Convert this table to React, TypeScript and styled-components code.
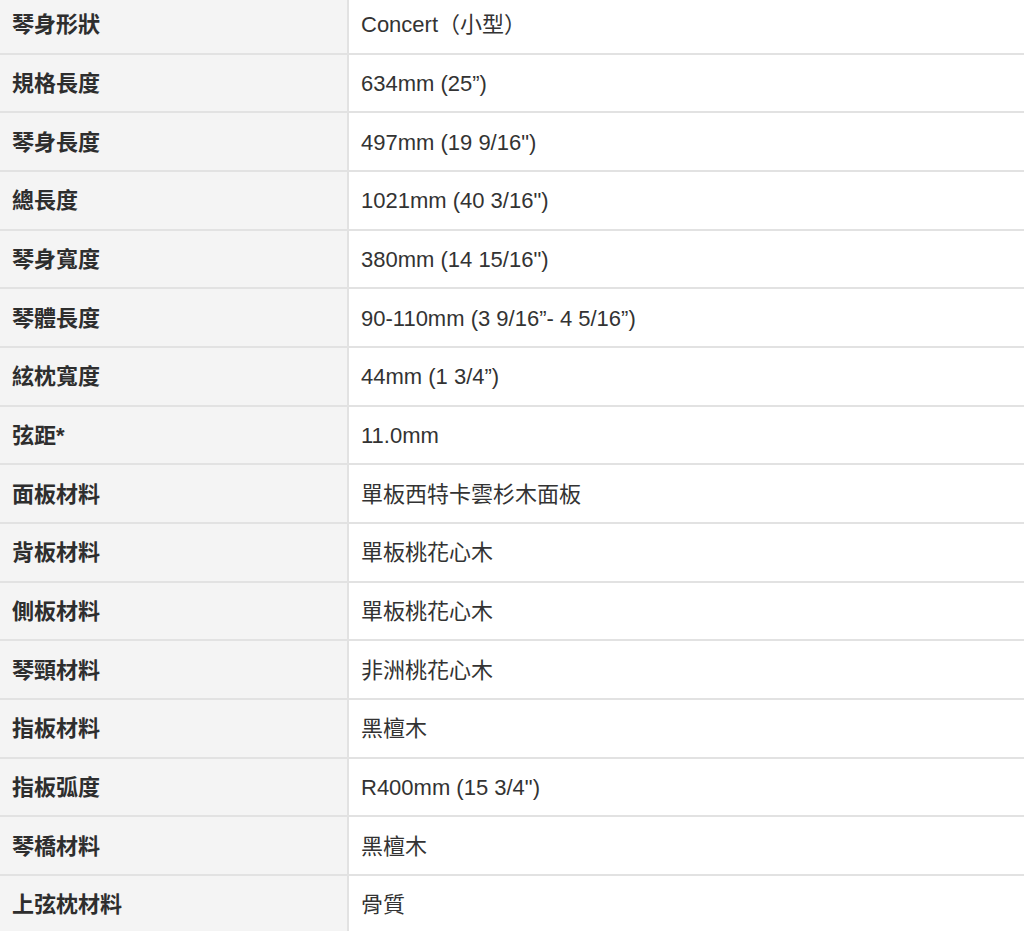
import React from "react";
import styled, { createGlobalStyle } from "styled-components";

const GlobalStyle = createGlobalStyle`
  html, body {
    margin: 0;
    padding: 0;
    background: #ffffff;
    overflow: hidden;
  }
  body {
    font-family: "Liberation Sans", "Noto Sans CJK TC", sans-serif;
    color: #333333;
  }
`;

const Table = styled.div`
  display: flex;
  flex-direction: column;
  width: 1024px;
  margin-top: -4px;
`;

const Row = styled.div`
  display: grid;
  grid-template-columns: 349px 1fr;
  height: 58.68px;
  box-sizing: border-box;
  border-bottom: 2px solid #e2e2e2;
`;

const Cell = styled.div<{ $head?: boolean }>`
  display: flex;
  align-items: center;
  box-sizing: border-box;
  padding: 2px 12px 0 12px;
  font-size: 22px;
  line-height: 1;
  font-weight: ${(p) => (p.$head ? 700 : 400)};
  background: ${(p) => (p.$head ? "#f4f4f4" : "#ffffff")};
  border-right: ${(p) => (p.$head ? "2px solid #e2e2e2" : "none")};
  color: ${(p) => (p.$head ? "#2e2e2e" : "#333333")};
  white-space: nowrap;
`;

const rows: [string, string][] = [
  ["琴身形狀", "Concert（小型）"],
  ["規格長度", "634mm (25”)"],
  ["琴身長度", "497mm (19 9/16\")"],
  ["總長度", "1021mm (40 3/16\")"],
  ["琴身寬度", "380mm (14 15/16\")"],
  ["琴體長度", "90-110mm (3 9/16”- 4 5/16”)"],
  ["絃枕寬度", "44mm (1 3/4”)"],
  ["弦距*", "11.0mm"],
  ["面板材料", "單板西特卡雲杉木面板"],
  ["背板材料", "單板桃花心木"],
  ["側板材料", "單板桃花心木"],
  ["琴頸材料", "非洲桃花心木"],
  ["指板材料", "黑檀木"],
  ["指板弧度", "R400mm (15 3/4\")"],
  ["琴橋材料", "黑檀木"],
  ["上弦枕材料", "骨質"],
];

export default function App() {
  return (
    <>
      <GlobalStyle />
      <Table>
        {rows.map(([k, v]) => (
          <Row key={k}>
            <Cell $head>{k}</Cell>
            <Cell>{v}</Cell>
          </Row>
        ))}
      </Table>
    </>
  );
}
